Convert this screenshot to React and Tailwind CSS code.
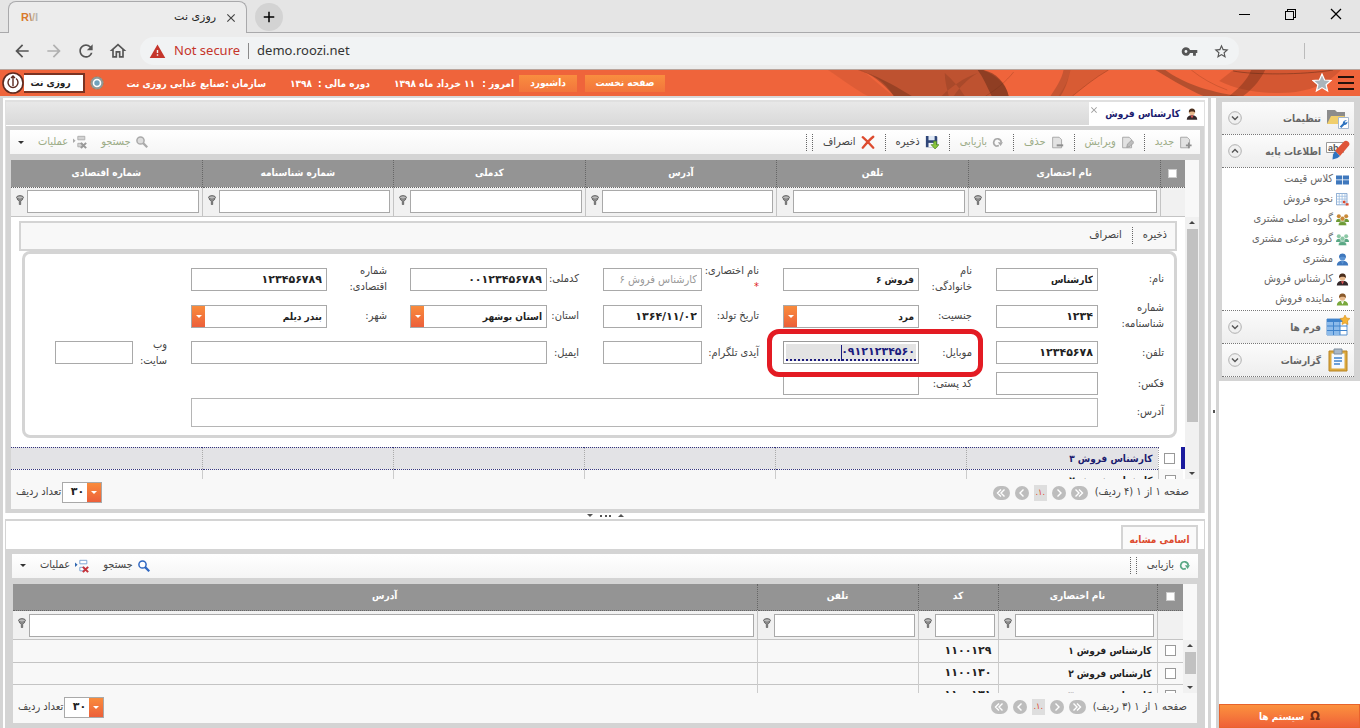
import React from "react";
import {
  MdArrowBack,
  MdArrowForward,
  MdRefresh,
  MdOutlineHome,
  MdWarning,
  MdVpnKey,
  MdStarBorder,
  MdClose,
  MdAdd,
} from "react-icons/md";
import { VscChromeMinimize, VscChromeRestore, VscChromeClose } from "react-icons/vsc";

/* ---------- icons ---------- */

const Svg = ({ size = 16, box = 16, className = "", children }) => (
  <svg width={size} height={size} viewBox={`0 0 ${box} ${box}`} fill="none" aria-hidden="true" className={`shrink-0 ${className}`}>
    {children}
  </svg>
);

const DocIcon = ({ kind }) => (
  <Svg size={13}>
    <path d="M2 1.500h8l3 3v10H2z" fill="#e2e2e2" stroke="#9d9d9d" />
    {kind === "add" && <path d="M12 8v7M8.500 11.500h7" stroke="#8f8f8f" strokeWidth="2" />}
    {kind === "edit" && <path d="M7 14l1-4 5-5 3 3-5 5z" fill="#bdbdbd" stroke="#9a9a9a" />}
    {kind === "remove" && <path d="M7 11.500h8" stroke="#8f8f8f" strokeWidth="2.500" />}
  </Svg>
);

const ReloadIcon = ({ color }) => (
  <Svg size={11}>
    <path d="M5.500 13A5.500 5.500 0 1 1 13.500 8" stroke={color} strokeWidth="2.400" />
    <path d="M8.500 7.500h7.500l-3.500 5.500z" fill={color} />
    <path d="M5 13.500l5-1" stroke={color} strokeWidth="2.400" />
  </Svg>
);

const SaveIcon = () => (
  <Svg size={14}>
    <path d="M1 1h12l1 1v12H1z" fill="#2f4678" />
    <path d="M4 1h7v5H4z" fill="#dfe8f5" />
    <path d="M4 9h7v5H4z" fill="#f4f7fb" />
    <path d="M10 7h3v4h3l-4.500 5L7 11h3z" fill="#8bc63f" stroke="#4e8a1e" strokeWidth=".8" />
  </Svg>
);

const CrossIcon = () => (
  <Svg size={14}>
    <path d="M2 2.500C6 6 10 10 14 14.500M14 2C9 6 5 11 2 14.500" stroke="#dd4b2f" strokeWidth="2.600" strokeLinecap="round" />
  </Svg>
);

const SearchIcon = ({ color, fill }) => (
  <Svg size={12}>
    <circle cx="6" cy="6" r="4.800" stroke={color} strokeWidth="2" fill={fill} />
    <path d="M9.500 9.500l5.500 5.500" stroke={color} strokeWidth="3" />
  </Svg>
);

const TreeIcon = ({ muted }) => (
  <Svg size={14}>
    <path d="M0 4l3 2.500L0 9z" fill={muted ? "#aaa" : "#2f67b1"} />
    <path d="M5.500 1.500h8v4h-8zM5.500 9.500h5v4h-5z" fill={muted ? "#d3d3d3" : "#fff"} stroke={muted ? "#aaa" : "#6f9ccf"} />
    <path d="M9 9l6 6M15 9l-6 6" stroke={muted ? "#999" : "#c5333b"} strokeWidth="2.400" />
  </Svg>
);

const FilterIcon = () => (
  <Svg size={10} box={10} className="mb-1">
    <ellipse cx="5" cy="2.500" rx="3.400" ry="1.800" stroke="#555" fill="#bbb" />
    <path d="M2 4l2.300 2.500V9.500h1.400V6.500L8 4" fill="#888" stroke="#555" strokeWidth=".7" />
  </Svg>
);

const Person = ({ hair, face = "#e8b98c", coat, shirt = "#fff", size = 13 }) => (
  <Svg size={size}>
    <path d="M1 15.500c0-4 2.500-6 7-6s7 2 7 6z" fill={coat} />
    <path d="M6 10l2 4 2-4z" fill={shirt} />
    <circle cx="8" cy="5.500" r="3.800" fill={face} />
    <path d="M3.800 6C3.300 2 5.500.500 8 .500s4.700 1.500 4.200 5.500C10.500 4 6 4 3.800 6z" fill={hair} />
  </Svg>
);

const Group = ({ a, b }) => (
  <Svg size={13}>
    <circle cx="3.500" cy="4" r="2.500" fill={a} />
    <circle cx="12.500" cy="4" r="2.500" fill={a} />
    <path d="M0 11c0-3 1.500-4 4-4h8c2.500 0 4 1 4 4z" fill={b} />
    <circle cx="8" cy="7" r="3" fill={a} stroke="#fff" strokeWidth=".6" />
    <path d="M3 15.500c0-4 2-5 5-5s5 1 5 5z" fill={b} stroke="#fff" strokeWidth=".6" />
  </Svg>
);

const PriceIcon = () => (
  <Svg size={13}>
    <path d="M0 3h7.500v5H0zM8.500 3H16v5H8.500zM0 9h7.500v5H0zM8.500 9H16v5H8.500z" fill="#3f78bd" />
  </Svg>
);

const SheetIcon = () => (
  <Svg size={13}>
    <path d="M.500.500h13v14H.500z" fill="#fff" stroke="#6f96c6" />
    <path d="M.500 4h13M.500 7.500h13M.500 11h13M4 .500v14M7.500.500v14M11 .500v14" stroke="#9dbce2" />
    <path d="M8.500 9.500h3v3h-3zM12 12.500h3.500v3H12z" fill="#dd4b2f" />
  </Svg>
);

const FolderIcon = () => (
  <Svg size={24} box={24}>
    <path d="M1 4h8l2 2h8v6H1z" fill="#8c8c8c" />
    <path d="M1 18V9h17v9z" fill="#8c8c8c" />
    <path d="M1 18l4-8h14l-5 8z" fill="#f0ce6c" />
    <path d="M12.500 11.500h10v11h-10z" fill="#fff" stroke="#a5b8cf" />
    <path d="M21 14.500a3 3 0 0 0-4.200 3l-3 3 1.500 1.500 3-3a3 3 0 0 0 3.200-3.500l-1.800 1.200-1.200-1z" fill="#2f74c0" />
  </Svg>
);

const PencilIcon = () => (
  <Svg size={24} box={24}>
    <path d="M.500 3.500h17v10H.500z" fill="#fff" stroke="#9a9a9a" />
    <text x="2" y="12" direction="ltr" fontSize="9" fontFamily="Liberation Sans, sans-serif" fill="#555">ab</text>
    <path d="M9 12L18 2.500c2-2.500 7 1 5 4L14 17z" fill="#df5539" />
    <path d="M9 12l5 5-2.500 2-5 1.500.500-5z" fill="#2f74c0" />
  </Svg>
);

const FormsIcon = () => (
  <Svg size={24} box={24}>
    <path d="M1 4h20v16H1z" fill="#fff" stroke="#5c93cf" />
    <path d="M1 4h13v16H1z" fill="#8dbbea" />
    <path d="M1 4h20v3H1z" fill="#3f83cc" />
    <path d="M1 11h20M1 15.500h20M7.500 4v16M14 4v16" stroke="#3f83cc" />
    <path d="M19 0l1.500 3 3.500.500-2.500 2.500.500 3.500-3-1.500-3 1.500.500-3.500L14 3.500l3.500-.500z" fill="#f5b335" stroke="#d98e17" strokeWidth=".6" />
  </Svg>
);

const ClipboardIcon = () => (
  <Svg size={24} box={24}>
    <path d="M3 3h18v20H3z" fill="#dca93e" stroke="#b98423" />
    <path d="M5.500 5.500h13v15h-13z" fill="#f4f9ff" />
    <path d="M8 1h8v5H8z" fill="#a9b7c6" stroke="#7f8d9c" />
    <path d="M8 10h8M8 13h8M8 16h6" stroke="#3f83cc" strokeWidth="1.400" />
  </Svg>
);

const RoundChevron = ({ up }) => (
  <Svg size={14} box={14}>
    <circle cx="7" cy="7" r="6.300" fill="#f0f0f0" stroke="#b0b0b0" />
    <path d={up ? "M4 8.500l3-3 3 3" : "M4 5.500l3 3 3-3"} stroke="#555" strokeWidth="1.400" />
  </Svg>
);

const Swirl = () => (
  <svg viewBox="0 0 545 26" preserveAspectRatio="none" fill="none" aria-hidden="true" className="block h-full w-full">
    <path d="M12 0C30 12 40 20 52 26H78C62 14 54 6 46 0z" fill="#8a3a1c" opacity=".16" />
    <path d="M42 0h125c16 6 24 16 26 26H78C68 10 56 4 42 0z" fill="#7a3a22" opacity=".42" />
    <path d="M42 0c18 5 34 14 54 26H78C66 12 56 4 42 0z" fill="#5f2a16" opacity=".4" />
    <path d="M129 3c8 7 14 14 20 23h-16c-2-8-4-16-4-23zM162 3c-14 5-26 13-36 23h12c6-9 14-17 24-23z" fill="#5f2a16" opacity=".22" />
    <path d="M198 2c-8 10-18 18-28 24" stroke="#6b2b14" opacity=".25" />
    <path d="M162 0c6 8 10 18 14 26h17C190 12 180 3 168 0z" fill="#5f2a16" opacity=".5" />
    <path d="M248 0c-2 10-8 18-13 26h10c6-9 8-18 10-26z" fill="#7a3a22" opacity=".35" />
    <path d="M257 26c10-8 22-18 36-26h-38c-2 9-6 18-12 26z" fill="#8a3a1c" opacity=".22" />
    <path d="M257 26c10-8 22-18 36-26" stroke="#6b2b14" opacity=".3" />
    <path d="M340 0c20 12 34 20 48 26h36C392 22 366 12 350 0z" fill="#7a3a22" opacity=".5" />
    <path d="M376 0c10 8 22 15 36 20" stroke="#8a3a1c" opacity=".3" />
    <path d="M418 0h108c-12 12-30 23-62 23-24 0-44-4-60-12z" fill="#9a3d1e" opacity=".32" />
    <path d="M436 0c-4 10-12 18-22 26h14c12-9 18-18 22-26z" fill="#6b2b14" opacity=".4" />
    <path d="M418 1c20 4 70 4 100-1" stroke="#5f2a16" opacity=".5" />
  </svg>
);

/* ---------- browser chrome ---------- */

function BrowserChrome() {
  return (
    <header className="bg-[#e5e5e5] font-['Noto_Sans','Open_Sans',sans-serif]">
      <div className="flex h-[33px] items-stretch border-b border-[#a9a9ab]">
        <div className="-mb-px ml-2 mt-px flex w-[239px] items-center justify-between rounded-t-lg border border-b-0 border-[#a9a9ab] bg-[#ececec] pl-3 pr-2">
          <span className="font-['Liberation_Sans',sans-serif] text-[11px] font-bold text-[#d9792b]">
            R<span className="text-[#b98a60]">\</span><span className="text-[#c9b08f]">/</span><span className="text-[#b7b7b7]">I</span>
          </span>
          <span className="flex items-center gap-2">
            <span dir="rtl" className="font-['DejaVu_Sans',sans-serif] text-[11px] text-[#222]">روزی نت</span>
            <button type="button" aria-label="Close tab" className="text-[14px] text-[#444]"><MdClose /></button>
          </span>
        </div>
        <button type="button" aria-label="New tab" className="ml-2 mt-[3px] flex h-7 w-7 items-center justify-center rounded-full bg-[#d3d3d3] text-[18px] text-black">
          <MdAdd />
        </button>
        <div className="ml-auto flex items-center gap-[30px] pb-1 pr-4 text-[16px] text-black">
          <button type="button" aria-label="Minimize"><VscChromeMinimize /></button>
          <button type="button" aria-label="Restore"><VscChromeRestore /></button>
          <button type="button" aria-label="Close"><VscChromeClose /></button>
        </div>
      </div>
      <div className="flex h-[37px] items-center border-b border-[#b9a49c] bg-[#ececec] pl-3">
        <div className="flex items-center gap-3 text-[20px] text-[#555]">
          <button type="button" aria-label="Back"><MdArrowBack /></button>
          <button type="button" aria-label="Forward" className="text-[#b0b0b0]"><MdArrowForward /></button>
          <button type="button" aria-label="Reload"><MdRefresh /></button>
          <button type="button" aria-label="Home"><MdOutlineHome /></button>
        </div>
        <div className="ml-3 flex h-7 flex-1 items-center rounded-full bg-[#f1f3f4] px-[9px]">
          <MdWarning className="text-[17px] text-[#c5352b]" />
          <span className="ml-2 text-[13px] text-[#c5352b]">Not secure</span>
          <span className="mx-2 h-4 w-px bg-[#8a8a8a]" />
          <span className="text-[13px] text-[#333]">demo.roozi.net</span>
          <span className="ml-auto flex items-center gap-[15px] text-[17px] text-[#555]">
            <MdVpnKey />
            <MdStarBorder />
          </span>
        </div>
        <div className="ml-[65px] mr-[55px] h-4 w-px bg-[#bbb]" />
      </div>
    </header>
  );
}

/* ---------- app header ---------- */

function AppHeader() {
  return (
    <div className="relative flex h-[26px] items-center bg-[#ef643b] pl-[2px] pr-[6px] text-[10px] font-bold text-white">
      <div className="absolute inset-y-0 left-[60%] right-0"><Swirl /></div>
      <div className="relative flex items-center gap-[6px]">
        <button type="button" aria-label="منو" className="flex w-[16px] flex-col gap-[4px]">
          <span className="h-[2px] bg-[#26120c]" />
          <span className="h-[2px] bg-[#26120c]" />
          <span className="h-[2px] bg-[#26120c]" />
        </button>
        <button type="button" aria-label="علاقه‌مندی">
          <Svg size={20} box={20}>
            <path d="M10 1l2.600 6 6.400.500-4.900 4.200 1.500 6.300L10 14.600 4.400 18l1.500-6.300L1 7.500 7.400 7z" fill="#a9b4bb" stroke="#fff" strokeWidth="1.200" />
          </Svg>
        </button>
      </div>
      <div className="flex-1" />
      <button type="button" className="h-[17px] w-[80px] bg-linear-to-b from-[#f98e3f] to-[#f2743c] leading-[16px]">صفحه نخست</button>
      <button type="button" className="mr-2 h-[17px] w-[58px] bg-linear-to-b from-[#f98e3f] to-[#f2743c] leading-[16px]">داشبورد</button>
      <div className="mr-[5px] flex w-[120px] items-center justify-between whitespace-nowrap"><span>امروز :</span><span>۱۱ خرداد ماه ۱۳۹۸</span></div>
      <div className="mr-6 flex w-[80px] items-center justify-between whitespace-nowrap"><span>دوره مالی :</span><span>۱۳۹۸</span></div>
      <div className="mr-6 flex w-[137px] items-center justify-between whitespace-nowrap"><span>سازمان :</span><span>صنایع غذایی روزی نت</span></div>
      <button type="button" aria-label="تنظیمات" className="mr-[24px]">
        <Svg size={16}>
          <circle cx="8" cy="8" r="6.500" fill="#8f9a9a" stroke="#b7794f" strokeDasharray="2 2" />
          <circle cx="8" cy="8" r="3.500" fill="#6fa3bd" stroke="#fff" strokeWidth="1.600" />
        </Svg>
      </button>
      <div className="mr-[4px] flex items-center">
        <button type="button" className="h-[20px] w-[61px] border-2 border-l-0 border-[#7a3322] bg-white pr-[6px] text-center font-bold leading-[16px] text-[#222]">روزی نت</button>
        <Svg size={22} box={22}>
          <circle cx="11" cy="11" r="10" fill="#fff" stroke="#5b2a20" strokeWidth="1.600" />
          <path d="M8 6.500a5 5 0 1 0 6 0M11 4v10M9 6l2-2 2 2" stroke="#5b2a20" strokeWidth="1.400" />
        </Svg>
      </div>
    </div>
  );
}

/* ---------- sidebar ---------- */

function SideSection({ icon, label, open }) {
  return (
    <button type="button" aria-expanded={!!open} className="flex h-[33px] w-full items-center border-b border-dotted border-[#777] bg-linear-to-b from-[#fbfbfb] to-[#eeeeee] pl-[6px] pr-[4px] text-[10px] font-bold text-[#666]">
      {icon}
      <span className="mr-[5px] flex-1 text-right">{label}</span>
      <RoundChevron up={open} />
    </button>
  );
}

const sideItems = [
  ["کلاس قیمت", <PriceIcon />],
  ["نحوه فروش", <SheetIcon />],
  ["گروه اصلی مشتری", <Group a="#c98a3a" b="#6d9a35" />],
  ["گروه فرعی مشتری", <Group a="#8cc7a5" b="#5aa885" />],
  ["مشتری", <Person hair="#3f78bd" face="#5b93d3" coat="#3f78bd" shirt="#5b93d3" />],
  ["کارشناس فروش", <Person hair="#4a2d1c" coat="#33272a" shirt="#d55" />],
  ["نماینده فروش", <Person hair="#8a5a2b" coat="#79a83d" />],
];

function Sidebar() {
  return (
    <aside className="flex w-[144px] shrink-0 flex-col border-l-[3px] border-[#d4d4d4] bg-white">
      <nav className="border-b-4 border-l-[3px] border-r-[6px] border-t-4 border-[#d4d4d4] bg-white">
        <SideSection icon={<FolderIcon />} label="تنظیمات" />
        <SideSection icon={<PencilIcon />} label="اطلاعات پایه" open />
        <ul className="border-b border-dotted border-[#777] py-px pr-[5px] text-[11px] text-[#666]">
          {sideItems.map(([label, icon]) => (
            <li key={label}>
              <a href="#" className="flex h-5 items-center gap-[3px]">{icon}<span>{label}</span></a>
            </li>
          ))}
        </ul>
        <SideSection icon={<FormsIcon />} label="فرم ها" />
        <SideSection icon={<ClipboardIcon />} label="گزارشات" />
      </nav>
      <button type="button" className="mt-auto flex h-6 items-center justify-center gap-[6px] border border-[#e8632c] bg-linear-to-b from-[#fb913e] to-[#ef6038] text-[10px] font-bold text-white">
        <span className="text-[13px] text-[#6b2b14]">Ω</span>سیستم ها
      </button>
    </aside>
  );
}

/* ---------- shared pieces ---------- */

const Sep = () => <span className="h-[17px] border-r border-dotted border-[#666]" />;

function Tool({ icon, label, muted }) {
  return (
    <button type="button" disabled={muted} className={muted ? "flex items-center gap-[5px] text-[#9bab86]" : "flex items-center gap-[5px] text-[#444]"}>
      {icon}
      <span>{label}</span>
    </button>
  );
}

const Caret = () => <span className="border-x-[3px] border-t-[3px] border-x-transparent border-t-[#333]" />;

const frameClass = "h-[23px] w-full min-w-0 rounded-none border border-[#a9a9a9] bg-white px-1 font-bold text-[#222] outline-none";
const boxClass = `${frameClass} text-[10px]`;
const digitClass = `${frameClass} font-['DejaVu_Sans',sans-serif] text-[11px]`;

function Combo({ id, value }) {
  return (
    <div className="relative w-full">
      <select id={id} defaultValue={value} className={`${boxClass} appearance-none`}>
        <option>{value}</option>
      </select>
      <span className="pointer-events-none absolute inset-y-px left-px flex w-[13px] items-center justify-center bg-linear-to-b from-[#f98b3c] to-[#ec5f3a]">
        <span className="border-x-[3px] border-t-[3px] border-x-transparent border-t-white" />
      </span>
    </div>
  );
}

function PagerButton({ label, double, left }) {
  return (
    <button type="button" aria-label={label} className={double ? "flex h-[14px] w-[17px] items-center justify-center rounded-full bg-[#bdbdbd]" : "flex h-[14px] w-[14px] items-center justify-center rounded-full bg-[#bdbdbd]"}>
      <Svg size={10} box={10} className={left ? "rotate-180" : ""}>
        <path d={double ? "M1.500 1.500L5 5 1.500 8.500M5 1.500L8.500 5 5 8.500" : "M3.500 1.500L7 5 3.500 8.500"} stroke="#fff" strokeWidth="1.400" />
      </Svg>
    </button>
  );
}

function Pager({ id, summary }) {
  return (
    <div className="flex h-[30px] items-center bg-[#f8f8f8] pb-[2px] pl-[5px] pr-[10px] text-[11px] text-[#444]">
      <span>{summary}</span>
      <div className="mr-[7px] flex items-center gap-[5px]">
        <PagerButton label="صفحه اول" double />
        <PagerButton label="صفحه قبل" />
        <span className="flex h-4 w-[13px] items-center justify-center bg-[#dedede] text-[9px] text-[#e0492c]">.۱.</span>
        <PagerButton label="صفحه بعد" left />
        <PagerButton label="صفحه آخر" double left />
      </div>
      <div className="relative mr-auto w-10">
        <select id={id} defaultValue="۳۰" className="h-[21px] w-full appearance-none rounded-none border border-[#a9a9a9] bg-white pr-[17px] font-['DejaVu_Sans',sans-serif] text-[11px] font-bold text-[#222] outline-none">
          <option>۳۰</option>
        </select>
        <span className="pointer-events-none absolute inset-y-px right-px flex w-[14px] items-center justify-center bg-linear-to-b from-[#f98b3c] to-[#ec5f3a]">
          <span className="border-x-[3px] border-t-[3px] border-x-transparent border-t-white" />
        </span>
      </div>
      <label htmlFor={id} className="mr-px">تعداد ردیف</label>
    </div>
  );
}

const CheckBox = ({ label, head }) => (
  <input
    type="checkbox"
    aria-label={label}
    className={head ? "mx-auto block h-[9px] w-[9px] appearance-none border border-[#ccc] bg-white" : "mx-auto block h-[11px] w-[11px] appearance-none border border-[#999] bg-white"}
  />
);

function GridHead({ cols, colgroup, id }) {
  return (
    <table className="min-w-0 flex-1 table-fixed border-collapse">
      {colgroup}
      <thead>
        <tr className="h-[27px] bg-[#949494] text-[10px] text-white">
          <th className="border-b border-dotted border-[#666]"><CheckBox label="انتخاب همه" head /></th>
          {cols.map((c) => (
            <th key={c} className="border-b border-r border-dotted border-[#666] pb-[2px] font-bold">{c}</th>
          ))}
        </tr>
        <tr className="h-[29px] bg-[#f1f1f1]">
          <td className="border-b border-[#c4c4c4]" />
          {cols.map((c) => (
            <td key={c} className="border-b border-r border-[#c4c4c4] p-0">
              <div className="flex items-center gap-[2px] pl-[4px] pr-[3px]">
                <input id={`${id}-${c}`} aria-label={`فیلتر ${c}`} className={boxClass} />
                <FilterIcon />
              </div>
            </td>
          ))}
        </tr>
      </thead>
    </table>
  );
}

function ScrollBar({ thumb }) {
  return (
    <div className="flex w-[14px] shrink-0 flex-col items-center bg-[#f1f1f1] py-[4px]">
      <span className="border-x-[3px] border-b-[3px] border-x-transparent border-b-[#444]" />
      <span className={`mt-[5px] w-[11px] bg-[#c1c1c1] ${thumb}`} />
      <span className="mt-auto border-x-[3px] border-t-[3px] border-x-transparent border-t-[#444]" />
    </div>
  );
}

/* ---------- upper grid with edit form ---------- */

const topCols = ["نام اختصاری", "تلفن", "آدرس", "کدملی", "شماره شناسنامه", "شماره اقتصادی"];

const TopColgroup = () => (
  <colgroup>
    <col className="w-[25px]" />
    {topCols.map((c) => <col key={c} />)}
  </colgroup>
);

const Lbl = ({ htmlFor, className, children }) => (
  <label htmlFor={htmlFor} className={`self-center whitespace-nowrap leading-4 ${className}`}>{children}</label>
);

function EditForm() {
  return (
    <form className="px-2 pt-[4px]" onSubmit={(e) => e.preventDefault()}>
      <div className="flex h-[30px] items-center gap-[10px] border-2 border-[#d4d4d4] bg-[#f8f8f8] pr-2 text-[11px] text-[#444]">
        <button type="submit">ذخیره</button>
        <Sep />
        <button type="button">انصراف</button>
      </div>
      <div className="ml-[3px] grid grid-cols-[66fr_102fr_24fr_53fr_136fr_24fr_57fr_99fr_24fr_32fr_137fr_23fr_60fr_136fr_24fr_34fr_78fr_30fr] grid-rows-[37px_37px_36px_26px_31px] items-center rounded-lg border-[3px] border-[#d4d4d4] pb-[7px] pr-[10px] pt-[7px] text-[11px] text-[#444]">
        <Lbl htmlFor="first" className="col-start-1 row-start-1">نام:</Lbl>
        <input id="first" defaultValue="کارشناس" className={`${boxClass} col-start-2 row-start-1`} />
        <Lbl htmlFor="last" className="col-start-4 row-start-1">نام<br />خانوادگی:</Lbl>
        <input id="last" defaultValue="فروش ۶" className={`${boxClass} col-start-5 row-start-1`} />
        <Lbl htmlFor="short" className="col-start-7 row-start-1">نام اختصاری:<br /><span className="text-[#d22]">*</span></Lbl>
        <input id="short" readOnly defaultValue="کارشناس فروش ۶" className="col-start-8 row-start-1 h-[23px] w-full min-w-0 border border-[#a9a9a9] bg-white px-1 text-[11px] text-[#999]" />
        <Lbl htmlFor="nid" className="col-start-10 row-start-1">کدملی:</Lbl>
        <input id="nid" defaultValue="۰۰۱۲۳۴۵۶۷۸۹" className={`${digitClass} col-start-11 row-start-1`} />
        <Lbl htmlFor="eco" className="col-start-13 row-start-1">شماره<br />اقتصادی:</Lbl>
        <input id="eco" defaultValue="۱۲۳۴۵۶۷۸۹" className={`${digitClass} col-start-14 row-start-1`} />

        <Lbl htmlFor="cert" className="col-start-1 row-start-2">شماره<br />شناسنامه:</Lbl>
        <input id="cert" defaultValue="۱۲۳۴" className={`${digitClass} col-start-2 row-start-2`} />
        <Lbl htmlFor="sex" className="col-start-4 row-start-2">جنسیت:</Lbl>
        <div className="col-start-5 row-start-2"><Combo id="sex" value="مرد" /></div>
        <Lbl htmlFor="birth" className="col-start-7 row-start-2">تاریخ تولد:</Lbl>
        <input id="birth" dir="ltr" defaultValue="۱۳۶۴/۱۱/۰۲" className={`${digitClass} col-start-8 row-start-2 text-right`} />
        <Lbl htmlFor="state" className="col-start-10 row-start-2">استان:</Lbl>
        <div className="col-start-11 row-start-2"><Combo id="state" value="استان بوشهر" /></div>
        <Lbl htmlFor="city" className="col-start-13 row-start-2">شهر:</Lbl>
        <div className="col-start-14 row-start-2"><Combo id="city" value="بندر دیلم" /></div>

        <Lbl htmlFor="tel" className="col-start-1 row-start-3">تلفن:</Lbl>
        <input id="tel" defaultValue="۱۲۳۴۵۶۷۸" className={`${digitClass} col-start-2 row-start-3`} />
        <Lbl htmlFor="mobile" className="col-start-4 row-start-3">موبایل:</Lbl>
        <div className="relative col-start-5 row-start-3 flex h-[23px] border border-[#999] bg-white p-[2px]">
          <input id="mobile" defaultValue="۰۹۱۲۱۲۳۴۵۶۰" className="h-full w-full min-w-0 border-b-2 border-dotted border-[#1b1b7e] bg-[#e3e3e3] px-px font-['DejaVu_Sans',sans-serif] text-[11px] font-bold text-[#1b1b7e] outline-none" />
          <span className="absolute right-[76px] top-[3px] h-4 w-px bg-[#1b1b7e]" />
        </div>
        <div className="pointer-events-none z-10 col-span-2 col-start-4 row-start-3 -my-[6px] -ml-[16px] -mr-[11px] self-stretch rounded-xl border-[5px] border-[#e31b23]" />
        <Lbl htmlFor="telegram" className="col-start-7 row-start-3">آیدی تلگرام:</Lbl>
        <input id="telegram" className={`${boxClass} col-start-8 row-start-3`} />
        <Lbl htmlFor="email" className="col-start-10 row-start-3">ایمیل:</Lbl>
        <input id="email" className={`${boxClass} col-span-4 col-start-11 row-start-3`} />
        <Lbl htmlFor="web" className="col-start-16 row-start-3">وب<br />سایت:</Lbl>
        <input id="web" className={`${boxClass} col-start-17 row-start-3`} />

        <Lbl htmlFor="fax" className="col-start-1 row-start-4">فکس:</Lbl>
        <input id="fax" className={`${boxClass} col-start-2 row-start-4`} />
        <Lbl htmlFor="zip" className="col-start-4 row-start-4">کد پستی:</Lbl>
        <input id="zip" className={`${boxClass} col-start-5 row-start-4`} />

        <Lbl htmlFor="address" className="col-start-1 row-start-5">آدرس:</Lbl>
        <textarea id="address" className="col-span-13 col-start-2 row-start-5 h-[29px] w-full resize-none border border-[#b5b5b5] bg-white outline-none" />
      </div>
    </form>
  );
}

function TopPanel() {
  return (
    <section className="border-x border-t-2 border-[#e0e0e0]">
      <div className="flex h-6 items-stretch border-b border-white bg-linear-to-b from-[#e8e8e8] to-[#d9d9d9]">
        <div className="flex w-[115px] items-center gap-[6px] bg-white pr-[6px] text-[10px] font-bold text-[#1b1b6e]">
          <Person hair="#4a2d1c" coat="#33272a" shirt="#d55" size={12} />
          <span className="whitespace-nowrap">کارشناس فروش</span>
          <button type="button" aria-label="بستن" className="mb-2 ml-[2px] mr-auto text-[10px] text-[#999]"><MdClose /></button>
        </div>
      </div>
      <div className="bg-[#d4d4d4] px-1 pb-1 pt-[4px]">
        <div className="flex h-6 items-center gap-[10px] bg-linear-to-b from-white to-[#f5f5f5] pl-2 pr-2 text-[11px]">
          <Tool muted icon={<DocIcon kind="add" />} label="جدید" /><Sep />
          <Tool muted icon={<DocIcon kind="edit" />} label="ویرایش" /><Sep />
          <Tool muted icon={<DocIcon kind="remove" />} label="حذف" /><Sep />
          <Tool muted icon={<ReloadIcon color="#a9a9a9" />} label="بازیابی" /><Sep />
          <Tool icon={<SaveIcon />} label="ذخیره" /><Sep />
          <Tool icon={<CrossIcon />} label="انصراف" />
          <span className="flex gap-[5px]"><Sep /><Sep /></span>
          <span className="mr-auto flex items-center gap-[14px]">
            <Tool muted icon={<SearchIcon color="#aaa" fill="#ddd" />} label="جستجو" />
            <Tool muted icon={<TreeIcon muted />} label="عملیات" />
            <Caret />
          </span>
        </div>
        <div className="mx-px mt-[6px] bg-white">
          <div className="flex">
            <div className="w-[14px] shrink-0 bg-[#f8f8f8]" />
            <GridHead id="top" cols={topCols} colgroup={<TopColgroup />} />
          </div>
          <div className="flex h-[262px] overflow-hidden">
            <ScrollBar thumb="h-[193px]" />
            <div className="min-w-0 flex-1">
              <EditForm />
              <table className="mt-[9px] w-full table-fixed border-collapse text-[10px] font-bold">
                <TopColgroup />
                <tbody>
                  <tr className="h-[22px] text-[#1b1b6e]">
                    <td className="border-r-4 border-[#1b1b9e] bg-white p-0"><CheckBox label="انتخاب کارشناس فروش ۳" /></td>
                    <td className="border-y border-r border-dotted border-[#33337e] border-r-[#aaa] bg-[#e3e3e6] p-0 pr-[5px]">کارشناس فروش ۳</td>
                    {topCols.slice(1).map((c) => <td key={c} className="border-y border-r border-dotted border-[#33337e] border-r-[#aaa] bg-[#e3e3e6]" />)}
                  </tr>
                  <tr className="h-[22px] bg-[#f8f8f8] text-[#222]">
                    <td className="p-0"><CheckBox label="انتخاب کارشناس فروش ۲" /></td>
                    <td className="border-r border-[#ccc] p-0 pr-[5px]">کارشناس فروش ۲</td>
                    {topCols.slice(1).map((c) => <td key={c} className="border-r border-[#ccc]" />)}
                  </tr>
                </tbody>
              </table>
            </div>
          </div>
          <Pager id="top-size" summary="صفحه ۱ از ۱ (۴ ردیف)" />
        </div>
      </div>
    </section>
  );
}

/* ---------- lower panel ---------- */

const lowCols = ["نام اختصاری", "کد", "تلفن", "آدرس"];
const lowRows = [
  ["کارشناس فروش ۱", "۱۱۰۰۱۲۹"],
  ["کارشناس فروش ۲", "۱۱۰۰۱۳۰"],
  ["کارشناس فروش ۳", "۱۱۰۰۱۳۱"],
];

const LowColgroup = () => (
  <colgroup>
    <col className="w-[26px]" />
    <col className="w-[159px]" />
    <col className="w-[80px]" />
    <col className="w-[161px]" />
    <col />
  </colgroup>
);

function LowPanel() {
  return (
    <section className="flex flex-1 flex-col border-x border-t-2 border-[#d4d4d4]">
      <div className="flex h-7 items-end bg-white pr-[6px]">
        <button type="button" className="-mb-1 h-7 w-[77px] border-x-2 border-t-2 border-[#d4d4d4] bg-[#fafafa] text-[10px] font-bold text-[#dd4b2f]">اسامی مشابه</button>
      </div>
      <div className="flex-1 bg-[#d4d4d4] px-[6px] pt-[5px]">
        <div className="flex h-6 items-center gap-[10px] bg-linear-to-b from-white to-[#f5f5f5] pl-2 pr-2 text-[11px]">
          <Tool icon={<ReloadIcon color="#5aa885" />} label="بازیابی" />
          <span className="flex gap-[5px]"><Sep /><Sep /></span>
          <span className="mr-auto flex items-center gap-[14px]">
            <Tool icon={<SearchIcon color="#2f67c1" fill="#fff" />} label="جستجو" />
            <Tool icon={<TreeIcon />} label="عملیات" />
            <Caret />
          </span>
        </div>
        <div className="mx-px mt-[6px] bg-[#f8f8f8]">
          <div className="flex">
            <div className="w-[14px] shrink-0 bg-[#f8f8f8]" />
            <GridHead id="low" cols={lowCols} colgroup={<LowColgroup />} />
          </div>
          <div className="flex h-[53px] overflow-hidden">
            <ScrollBar thumb="h-[22px]" />
            <table className="min-w-0 flex-1 table-fixed border-collapse text-[10px] font-bold text-[#222]">
              <LowColgroup />
              <tbody>
                {lowRows.map(([name, code]) => (
                  <tr key={code} className="h-[22px] border-b border-[#c4c4c4]">
                    <td className="p-0"><CheckBox label={`انتخاب ${name}`} /></td>
                    <td className="border-r border-[#ccc] p-0 pr-[5px]">{name}</td>
                    <td className="border-r border-[#ccc] p-0 pr-[6px] font-['DejaVu_Sans',sans-serif] text-[11px]">{code}</td>
                    <td className="border-r border-[#ccc] p-0" />
                    <td className="border-r border-[#ccc] p-0" />
                  </tr>
                ))}
              </tbody>
            </table>
          </div>
          <Pager id="low-size" summary="صفحه ۱ از ۱ (۳ ردیف)" />
        </div>
      </div>
    </section>
  );
}

export default function App() {
  return (
    <div className="flex min-h-screen flex-col overflow-hidden bg-white">
      <BrowserChrome />
      <div dir="rtl" className="flex flex-1 flex-col font-['DejaVu_Sans_Condensed','DejaVu_Sans',sans-serif]">
        <AppHeader />
        <div className="flex flex-1 items-stretch border-t-2 border-[#d8d8d8]">
          <Sidebar />
          <div className="flex w-[5px] shrink-0 flex-col items-center justify-center bg-white pb-[4px]">
            <span className="h-[3px] w-[2px] bg-[#555]" />
          </div>
          <main className="flex min-w-0 flex-1 flex-col border-x-[3px] border-[#d4d4d4] bg-white pl-[2px] pr-[3px] pt-[2px]">
            <TopPanel />
            <div className="flex h-[6px] items-center justify-center gap-[7px]">
              <span className="border-x-[3px] border-b-[3px] border-x-transparent border-b-[#555]" />
              <span className="w-[11px] border-t-2 border-dotted border-[#555]" />
              <span className="border-x-[3px] border-t-[3px] border-x-transparent border-t-[#555]" />
            </div>
            <LowPanel />
          </main>
        </div>
      </div>
    </div>
  );
}
